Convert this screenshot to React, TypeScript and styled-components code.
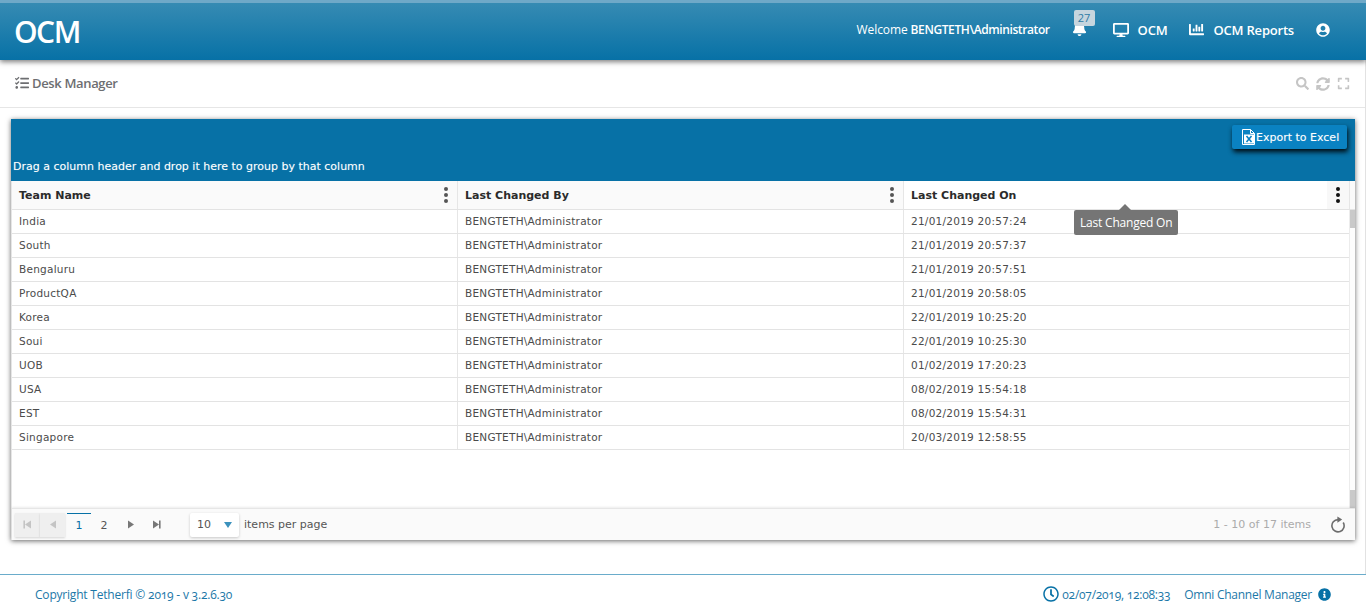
import React from 'react';
import styled, { createGlobalStyle } from 'styled-components';
import { FaBell, FaChartBar, FaDesktop, FaExpand, FaInfoCircle, FaRegClock, FaSearch, FaSyncAlt, FaTasks, FaUserCircle } from 'react-icons/fa';

const GlobalStyle = createGlobalStyle`
  html, body {
    margin: 0;
    height: 100%;
    overflow: hidden;
    background: #fff;
    font-family: "Open Sans", "Noto Sans", sans-serif;
  }
`;

const Page = styled.div`
  width: 1366px;
  height: 613px;
  display: flex;
  flex-direction: column;
`;

/** ******
 * Top bar
 */
const TopBar = styled.header`
  height: 57px;
  flex: none;
  display: flex;
  align-items: center;
  justify-content: space-between;
  border-top: 3px solid #6fa9c8;
  padding: 0 36px 0 14px;
  background: linear-gradient(#368bb3, #0771a6);
  box-shadow: 0 2px 5px rgba(0, 0, 0, 0.5);
  color: #fff;
  position: relative;
  z-index: 2;
`;

const Logo = styled.div`
  font-size: 30px;
  font-weight: 600;
  letter-spacing: -1.5px;
  margin-top: -1px;
`;

const Nav = styled.nav`
  display: flex;
  align-items: center;
  font-size: 13px;
  font-weight: 600;
  margin-top: -4px;
`;

const Welcome = styled.span`
  font-size: 12px;
  font-weight: 400;
  letter-spacing: -0.1px;
  margin-right: 22px;

  b {
    font-size: 12px;
    font-weight: 600;
    letter-spacing: -0.4px;
  }
`;

const Bell = styled.span`
  position: relative;
  display: flex;
  margin-right: 26px;
  margin-top: -2px;
  font-size: 15px;
`;

const Badge = styled.span`
  position: absolute;
  left: 2px;
  top: -11px;
  width: 21px;
  height: 16px;
  border-radius: 2px;
  background: #c6d5de;
  color: #2f7ba5;
  font-size: 11px;
  font-weight: 400;
  line-height: 16px;
  text-align: center;
`;

const NavItem = styled.span<{ $gap: number; $after: number }>`
  display: flex;
  align-items: center;
  gap: ${(p) => p.$gap}px;
  margin-right: ${(p) => p.$after}px;
  letter-spacing: -0.2px;
`;

/** ******
 * Desk manager title row
 */
const Main = styled.main`
  flex: 1;
  display: flex;
  flex-direction: column;
  border-right: 1px solid #e2e2e2;
  min-height: 0;
`;

const TitleRow = styled.div`
  height: 47px;
  flex: none;
  display: flex;
  align-items: center;
  justify-content: space-between;
  padding: 0 15px;
  border-bottom: 1px solid #e6e6e6;
`;

const Title = styled.div`
  display: flex;
  align-items: center;
  gap: 3px;
  margin-top: -2px;
  color: #6d6e71;
  font-size: 13px;
  font-weight: 600;
  letter-spacing: -0.35px;
`;

const TitleTools = styled.div`
  display: flex;
  align-items: center;
  gap: 7px;
  color: #c5c5c5;
`;

/** ******
 * Grid card
 */
const Card = styled.section`
  margin: 11px 10px 0 11px;
  height: 421px;
  display: flex;
  flex-direction: column;
  box-shadow: 0 1px 5px rgba(0, 0, 0, 0.6);
  background: #fff;
`;

const GroupBar = styled.div`
  height: 62px;
  flex: none;
  background: #0771a6;
  color: #fff;
  display: flex;
  flex-direction: column;
  padding: 6px 8px 7px 2px;
  box-sizing: border-box;
`;

const ExportButton = styled.button`
  align-self: flex-end;
  height: 24px;
  width: 115px;
  display: flex;
  align-items: center;
  padding: 0 0 0 9px;
  gap: 0;
  border: 0;
  border-radius: 2px;
  background: #0a82c2;
  box-shadow: 1px 3px 5px rgba(0, 0, 0, 0.9);
  color: #fff;
  font-family: "DejaVu Sans", sans-serif;
  font-size: 11px;
  text-shadow: 0 0 1px rgba(255, 255, 255, 0.3);
`;

const GroupHint = styled.div`
  margin-top: auto;
  font-family: "DejaVu Sans", sans-serif;
  font-size: 11px;
  line-height: 14px;
  text-shadow: 0 0 1px rgba(255, 255, 255, 0.3);
`;

const GridBody = styled.div`
  flex: 1;
  display: flex;
  flex-direction: column;
  min-height: 0;
  position: relative;
  border-left: 1px solid #e6e6e6;
`;

const HeadRow = styled.div`
  height: 28px;
  flex: none;
  display: grid;
  grid-template-columns: 446px 446px 446px 5px;
  background: #fafafa;
  border-bottom: 1px solid #e3e3e3;
`;

const HeadCell = styled.div<{ $hot?: boolean }>`
  display: flex;
  align-items: center;
  justify-content: space-between;
  padding-left: 7px;
  border-right: 1px solid #e6e6e6;
  background: ${(p) => (p.$hot ? '#fff' : 'transparent')};
  color: #2b2b2b;
  font-family: "DejaVu Sans", sans-serif;
  font-size: 11px;
  font-weight: 700;
  letter-spacing: 0;

  span:last-child {
    color: ${(p) => (p.$hot ? '#111' : '#555')};
    background: ${(p) => (p.$hot ? '#f8f8f8' : 'transparent')};
  }
`;

const MenuDots = styled.span`
  width: 22px;
  height: 28px;
  display: flex;
  flex-direction: column;
  align-items: center;
  justify-content: center;
  gap: 2px;

  i {
    width: 4px;
    height: 4px;
    border-radius: 50%;
    background: currentColor;
  }
`;

const Rows = styled.div`
  flex: 1;
  min-height: 0;
  display: flex;
  position: relative;
`;

const RowList = styled.div`
  flex: 1;
`;

const Row = styled.div`
  height: 23px;
  display: grid;
  grid-template-columns: 446px 446px 445px;
  border-bottom: 1px solid #e3e3e3;
`;

const Cell = styled.div`
  padding-left: 7px;
  border-right: 1px solid #e6e6e6;
  color: #4b4b4b;
  font-family: "DejaVu Sans", sans-serif;
  font-size: 10.5px;
  letter-spacing: 0.25px;
  line-height: 23px;
  white-space: nowrap;

  &:last-child {
    border-right: 0;
  }
`;

const ScrollTrack = styled.div`
  width: 6px;
  flex: none;
  display: flex;
  flex-direction: column;
  justify-content: space-between;
  background: #fdfdfd;
  border-left: 1px solid #ececec;
  box-sizing: border-box;
`;

const ScrollThumb = styled.div`
  height: 18px;
  background: #c9c9c9;
`;

const Tooltip = styled.div`
  position: absolute;
  left: 1062px;
  top: 29px;
  height: 25px;
  padding: 0 6px;
  border-radius: 2px;
  background: #757575;
  color: #fff;
  font-size: 12px;
  letter-spacing: -0.2px;
  line-height: 25px;
  z-index: 3;

  &::before {
    content: '';
    position: absolute;
    left: 45px;
    top: -6px;
    border-left: 6px solid transparent;
    border-right: 6px solid transparent;
    border-bottom: 6px solid #757575;
  }
`;

/** ******
 * Pager
 */
const Pager = styled.div`
  height: 32px;
  flex: none;
  display: flex;
  align-items: center;
  background: #fafafa;
  border-top: 1px solid #e6e6e6;
  box-shadow: 0 -1px 2px rgba(0, 0, 0, 0.08);
  padding: 0 9px 0 3px;
  box-sizing: border-box;
  font-family: "DejaVu Sans", sans-serif;
  font-size: 11px;
  color: #555;
  position: relative;
`;

const PageArrow = styled.span<{ $off?: boolean }>`
  width: 25px;
  height: 24px;
  display: flex;
  align-items: center;
  justify-content: center;
  color: ${(p) => (p.$off ? '#c4c4c4' : '#777')};
  background: ${(p) => (p.$off ? '#efefef' : 'transparent')};
  box-shadow: ${(p) => (p.$off ? '0 1px 2px rgba(0,0,0,0.15)' : 'none')};
`;

const PageNumbers = styled.span`
  display: flex;
  gap: 1px;
  margin: 0 3px 0 2px;
`;

const PageNumber = styled.span<{ $active?: boolean }>`
  width: 24px;
  height: 22px;
  display: flex;
  align-items: center;
  justify-content: center;
  font-size: 11px;
  border-top: 1px solid ${(p) => (p.$active ? '#0771a6' : 'transparent')};
  color: ${(p) => (p.$active ? '#0771a6' : '#555')};
`;

const SizeSelect = styled.span`
  width: 49px;
  height: 24px;
  margin: 0 5px 0 21px;
  padding: 0 7px;
  box-sizing: border-box;
  display: flex;
  align-items: center;
  justify-content: space-between;
  background: #fff;
  border-radius: 2px;
  box-shadow: 0 1px 3px rgba(0, 0, 0, 0.2);
  font-size: 11px;

  &::after {
    content: '';
    border-left: 4px solid transparent;
    border-right: 4px solid transparent;
    border-top: 6px solid #3c92bd;
  }
`;

const PageInfo = styled.span`
  margin-left: auto;
  margin-right: 19px;
  color: #ababab;
`;

/** ******
 * Footer
 */
const Footer = styled.footer`
  height: 39px;
  flex: none;
  display: flex;
  align-items: center;
  justify-content: space-between;
  padding: 0 35px;
  border-top: 1px solid #6aaccb;
  color: #1c78a8;
  font-size: 12px;
  font-variant-numeric: oldstyle-nums;
  box-sizing: border-box;
`;

const Copyright = styled.span`
  letter-spacing: -0.2px;
`;

const FooterRight = styled.div`
  display: flex;
  align-items: center;
  gap: 3px;
  letter-spacing: -0.25px;
`;

const Clock = styled.span`
  display: flex;
  color: #0771a6;
`;

const AppName = styled.span`
  margin: 0 3px 0 11px;
  letter-spacing: -0.25px;
`;

const ExcelIcon = () => (
  <svg width="15" height="16" viewBox="0 0 15 16">
    <path d="M1.5.5h8l4 4v11h-12z" fill="none" stroke="#fff" />
    <path d="M9.5.5v4h4" fill="none" stroke="#fff" />
    <rect x="3" y="5.5" width="10.5" height="9" fill="#fff" />
    <path d="M5.5 7l5 6M10.5 7l-5 6" stroke="#0a82c2" strokeWidth="1.6" />
  </svg>
);

const PagerIcon: React.FC<{ flip?: boolean; bar?: boolean }> = ({ flip, bar }) => (
  <svg width="11" height="11" viewBox="0 0 11 11" style={flip ? { transform: 'scaleX(-1)' } : undefined}>
    <path d="M2 1.5l6 4-6 4z" fill="currentColor" />
    {bar && <rect x="8" y="1.5" width="1.6" height="8" fill="currentColor" />}
  </svg>
);

const RefreshIcon = () => (
  <svg width="16" height="17" viewBox="0 0 16 17">
    <path d="M8 3.6A6.1 6.1 0 1 0 13.2 6.5" fill="none" stroke="#6d6d6d" strokeWidth="1.6" />
    <path d="M7.4 0.4l4.8 3.2-4.8 3.2z" fill="#6d6d6d" />
  </svg>
);

const DOTS = (
  <MenuDots>
    <i />
    <i />
    <i />
  </MenuDots>
);

const ROWS = [
  ['India', '21/01/2019 20:57:24'],
  ['South', '21/01/2019 20:57:37'],
  ['Bengaluru', '21/01/2019 20:57:51'],
  ['ProductQA', '21/01/2019 20:58:05'],
  ['Korea', '22/01/2019 10:25:20'],
  ['Soui', '22/01/2019 10:25:30'],
  ['UOB', '01/02/2019 17:20:23'],
  ['USA', '08/02/2019 15:54:18'],
  ['EST', '08/02/2019 15:54:31'],
  ['Singapore', '20/03/2019 12:58:55'],
];

const App: React.FC = () => (
  <Page>
    <GlobalStyle />
    <TopBar>
      <Logo>OCM</Logo>
      <Nav>
        <Welcome>
          Welcome <b>BENGTETH\Administrator</b>
        </Welcome>
        <Bell>
          <FaBell />
          <Badge>27</Badge>
        </Bell>
        <NavItem $gap={9} $after={22}>
          <FaDesktop size={16} />
          OCM
        </NavItem>
        <NavItem $gap={9} $after={22}>
          <FaChartBar size={15} />
          OCM Reports
        </NavItem>
        <FaUserCircle size={14} />
      </Nav>
    </TopBar>
    <Main>
      <TitleRow>
        <Title>
          <FaTasks size={14} />
          Desk Manager
        </Title>
        <TitleTools>
          <FaSearch size={13} />
          <FaSyncAlt size={14} />
          <FaExpand size={13} />
        </TitleTools>
      </TitleRow>
      <Card>
        <GroupBar>
          <ExportButton>
            <ExcelIcon />
            Export to Excel
          </ExportButton>
          <GroupHint>Drag a column header and drop it here to group by that column</GroupHint>
        </GroupBar>
        <GridBody>
          <HeadRow>
            <HeadCell>
              <span>Team Name</span>
              {DOTS}
            </HeadCell>
            <HeadCell>
              <span>Last Changed By</span>
              {DOTS}
            </HeadCell>
            <HeadCell $hot>
              <span>Last Changed On</span>
              {DOTS}
            </HeadCell>
          </HeadRow>
          <Rows>
            <RowList>
              {ROWS.map(([team, changedOn]) => (
                <Row key={team}>
                  <Cell>{team}</Cell>
                  <Cell>BENGTETH\Administrator</Cell>
                  <Cell>{changedOn}</Cell>
                </Row>
              ))}
            </RowList>
            <ScrollTrack>
              <ScrollThumb />
              <ScrollThumb />
            </ScrollTrack>
          </Rows>
          <Tooltip>Last Changed On</Tooltip>
          <Pager>
            <PageArrow $off>
              <PagerIcon flip bar />
            </PageArrow>
            <PageArrow $off>
              <PagerIcon flip />
            </PageArrow>
            <PageNumbers>
              <PageNumber $active>1</PageNumber>
              <PageNumber>2</PageNumber>
            </PageNumbers>
            <PageArrow>
              <PagerIcon />
            </PageArrow>
            <PageArrow>
              <PagerIcon bar />
            </PageArrow>
            <SizeSelect>10</SizeSelect>
            items per page
            <PageInfo>1 - 10 of 17 items</PageInfo>
            <RefreshIcon />
          </Pager>
        </GridBody>
      </Card>
    </Main>
    <Footer>
      <Copyright>Copyright Tetherfi © 2019 - v 3.2.6.30</Copyright>
      <FooterRight>
        <Clock>
          <FaRegClock size={16} />
        </Clock>
        02/07/2019, 12:08:33
        <AppName>Omni Channel Manager</AppName>
        <FaInfoCircle size={13} color="#0771a6" />
      </FooterRight>
    </Footer>
  </Page>
);

export default App;
